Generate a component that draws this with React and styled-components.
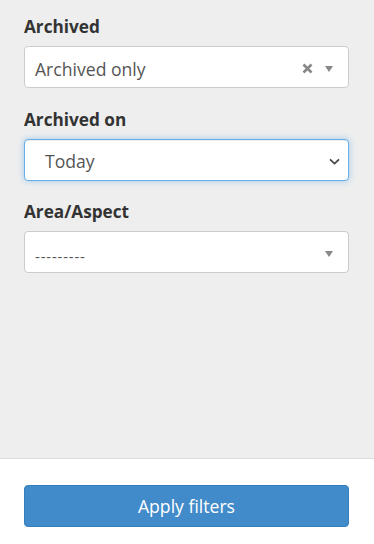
import React from 'react';
import styled, { createGlobalStyle } from 'styled-components';

const GlobalStyle = createGlobalStyle`
  html, body {
    margin: 0;
    padding: 0;
    height: 100%;
  }
  body {
    font-family: 'Open Sans', 'Noto Sans', sans-serif;
    color: #333;
  }
  #root {
    height: 100%;
  }
`;

const Panel = styled.div`
  display: flex;
  flex-direction: column;
  height: 100%;
`;

const Filters = styled.div`
  flex: 1;
  background: #eeeeee;
  padding: 14px 25px 0 24px;
  display: flex;
  flex-direction: column;
  gap: 18.5px;
`;

const Field = styled.div`
  display: flex;
  flex-direction: column;
  gap: 6px;
`;

const Label = styled.label`
  font-size: 17.2px;
  font-weight: 700;
  color: #333;
  line-height: 26px;
`;

const Box = styled.div`
  height: 42px;
  box-sizing: border-box;
  background: #fff;
  border: 1px solid ${p => (p.$focused ? '#66afe9' : '#cccccc')};
  border-radius: 4px;
  box-shadow: ${p =>
    p.$focused
      ? 'inset 0 1px 1px rgba(0,0,0,.075), 0 0 6px rgba(102,175,233,.6)'
      : 'none'};
  display: flex;
  align-items: center;
  padding: 3px 14px 0 ${p => p.$indent || 10}px;
  font-size: 17.6px;
  color: #555;
`;

const Value = styled.span`
  flex: 1;
  white-space: nowrap;
`;

const Placeholder = styled.span`
  flex: 1;
  font-size: 15px;
  letter-spacing: 0.8px;
  color: #555;
  padding-top: 4px;
`;

const Clear = () => (
  <svg width="11" height="11" viewBox="0 0 11 11" style={{ marginRight: 12 }}>
    <path d="M1.5 1.5 L9.5 9.5 M9.5 1.5 L1.5 9.5" stroke="#888" strokeWidth="2.6" />
  </svg>
);

const Caret = styled.span`
  width: 0;
  height: 0;
  margin-right: 1px;
  border-left: 4px solid transparent;
  border-right: 4px solid transparent;
  border-top: 6px solid #888;
`;

const Chevron = () => (
  <svg width="11" height="7" viewBox="0 0 11 7" style={{ marginRight: -6 }}>
    <path d="M1 1.3 L5.5 5.6 L10 1.3" fill="none" stroke="#444" strokeWidth="1.7" />
  </svg>
);

const Footer = styled.div`
  height: 86px;
  box-sizing: border-box;
  background: #fff;
  border-top: 1px solid #dddddd;
  padding: 26px 25px 0 24px;
`;

const ApplyButton = styled.button`
  width: 100%;
  height: 42px;
  background: #428bca;
  border: 1px solid #357ebd;
  border-radius: 4px;
  color: #fff;
  font-family: 'Open Sans', 'Noto Sans', sans-serif;
  font-size: 17.6px;
  cursor: pointer;
`;

const App = () => {
  return (
    <Panel>
      <GlobalStyle />
      <Filters>
        <Field>
          <Label>Archived</Label>
          <Box>
            <Value>Archived only</Value>
            <Clear />
            <Caret />
          </Box>
        </Field>
        <Field>
          <Label>Archived on</Label>
          <Box $focused $indent={20}>
            <Value>Today</Value>
            <Chevron />
          </Box>
        </Field>
        <Field>
          <Label>Area/Aspect</Label>
          <Box>
            <Placeholder>---------</Placeholder>
            <Caret />
          </Box>
        </Field>
      </Filters>
      <Footer>
        <ApplyButton>Apply filters</ApplyButton>
      </Footer>
    </Panel>
  );
};

export default App;
